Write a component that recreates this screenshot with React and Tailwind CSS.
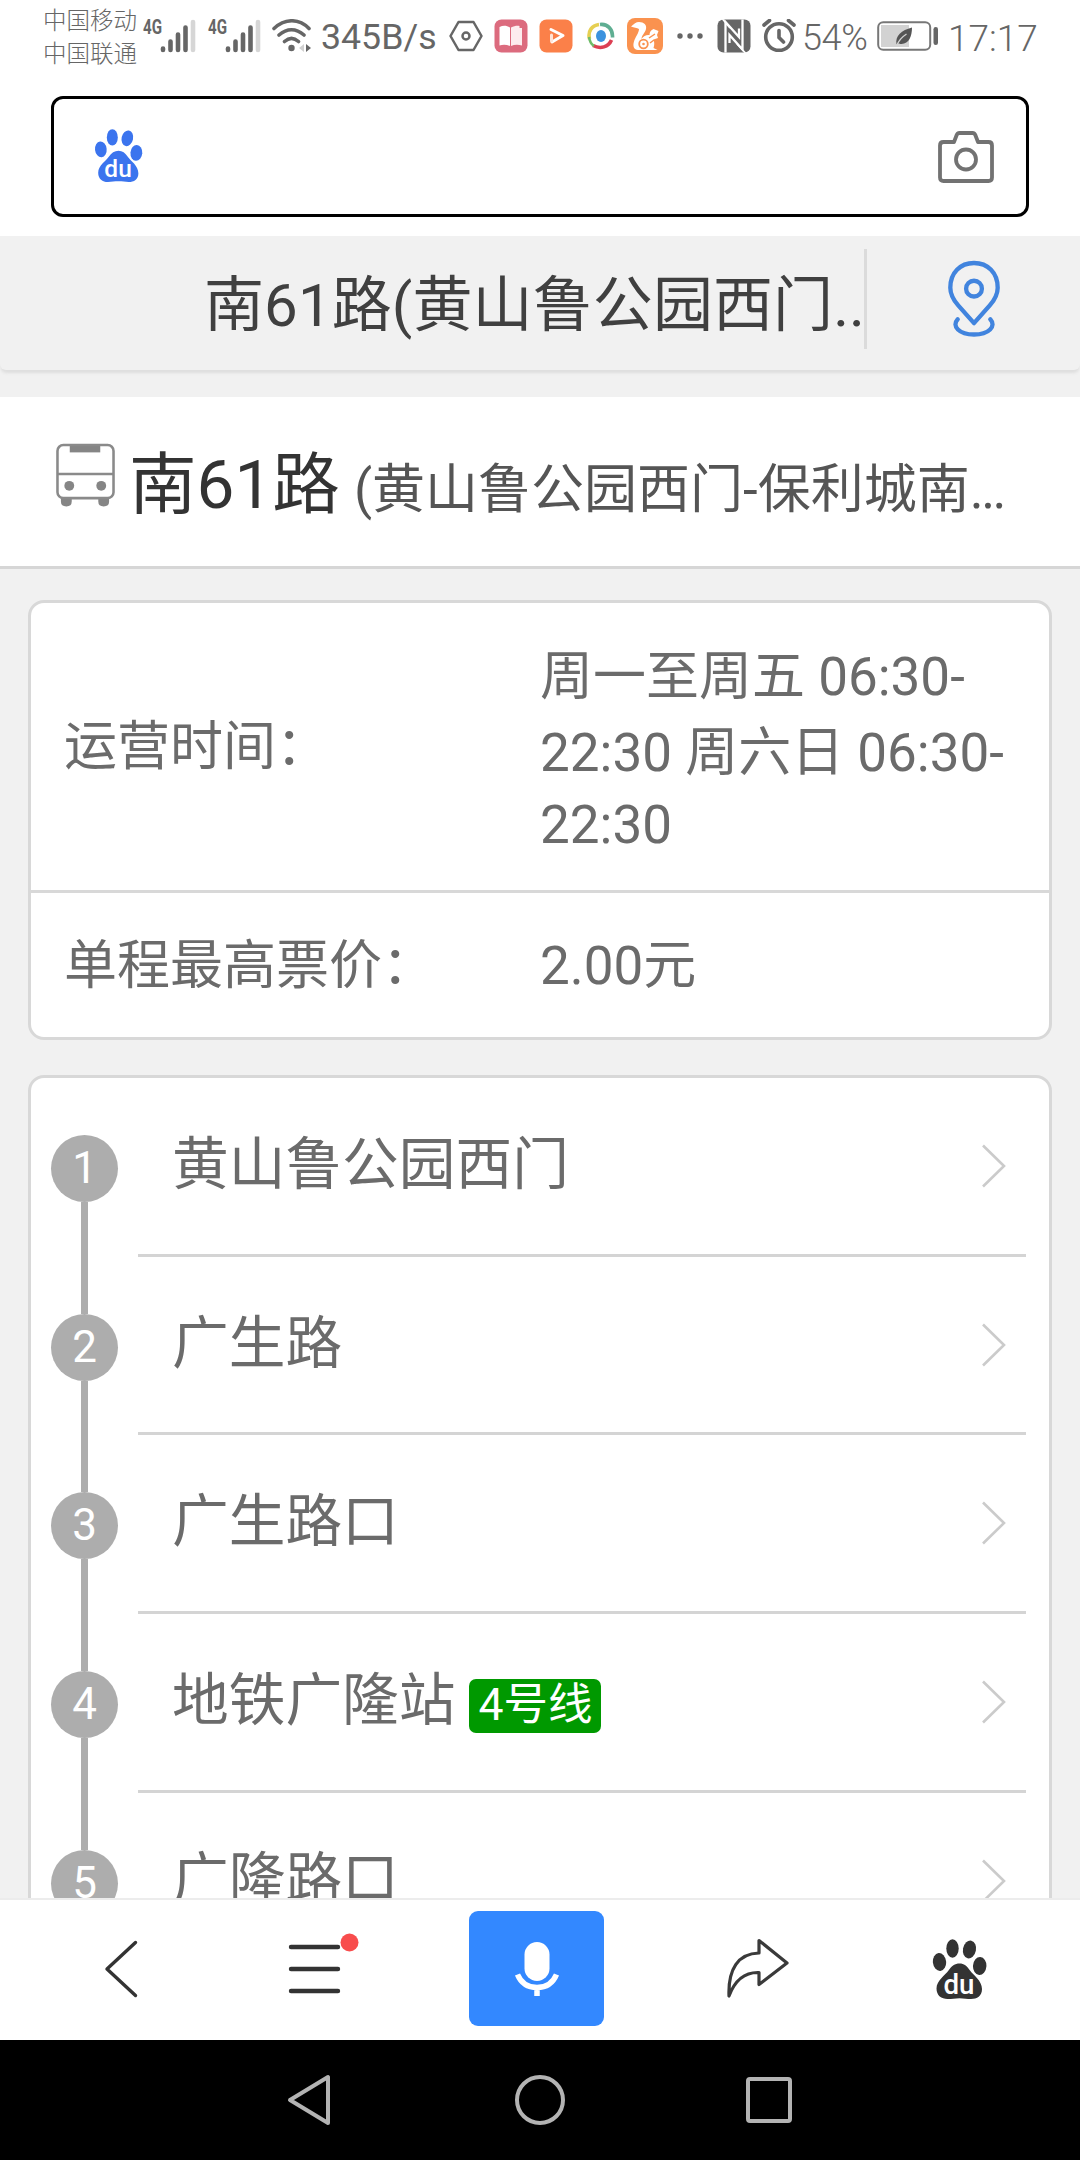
import React from 'react';

const stations = [
    { id: 1, name: '黄山鲁公园西门' },
    { id: 2, name: '广生路' },
    { id: 3, name: '广生路口' },
    { id: 4, name: '地铁广隆站', line: '4号线' },
    { id: 5, name: '广隆路口' },
];

function Paw({ className }) {
    return (
        <svg className={className} viewBox="0 0 54 60" fill="currentColor">
            <ellipse cx="7" cy="23" rx="6.6" ry="9" transform="rotate(-6 7 23)" />
            <ellipse cx="20" cy="9.5" rx="6.2" ry="9.3" />
            <ellipse cx="37" cy="10.5" rx="6.5" ry="9" transform="rotate(12 37 10.5)" />
            <ellipse cx="47.2" cy="27" rx="6.7" ry="9" transform="rotate(4 47.2 27)" />
            <path d="M27 24.5c4.5 0 7.500 2.500 10.500 7s12 10 12 18.500c0 7-5 10-11 10-4 0-7-.8-11.500-.8s-7.500.8-12 .8c-6 0-11-3.500-11-10.500 0-8 9-13.500 12-18s6.500-7 11-7z" />
            <text x="26.500" y="54.500" textAnchor="middle" fill="white" fontSize="28" fontWeight="500" textLength="31" lengthAdjust="spacingAndGlyphs" fontFamily="Roboto, sans-serif">du</text>
        </svg>
    );
}

function Signal({ className }) {
    return (
        <div className={className}>
            <svg className="w-[54px] h-[38px] overflow-visible" viewBox="0 0 54 38">
                <text x="0" y="16.500" fontSize="20" fontWeight="700" fill="#666" textLength="19" lengthAdjust="spacingAndGlyphs" fontFamily="Roboto, sans-serif">4G</text>
                <g strokeWidth="4.600" strokeLinecap="round" stroke="#666">
                    <path d="M20 31.500v1.500M27.500 24.500v8.500M35 17.500v15.500M42.500 10.500v22.500" />
                    <path d="M50 5v28" stroke="#d6d6d6" />
                </g>
            </svg>
        </div>
    );
}

function StatusBar() {
    return (
        <div className="h-[72px] shrink-0 flex items-center text-[#666] whitespace-nowrap">
            <div className="ml-[43px] w-[100px] text-[23.500px] leading-[33px] font-light pt-[4px]">
                <p>中国移动</p>
                <p>中国联通</p>
            </div>
            <Signal className="w-[65px]" />
            <Signal className="w-[64px]" />

            {/* WIFI */}
            <svg className="w-[40px] h-[34px] mr-[9px]" viewBox="0 0 40 34" fill="none" stroke="#666" strokeWidth="3.600" strokeLinecap="round">
                <path d="M2 9.500C13-.8 27-.8 37 9.500M7 16c8-7 17-7 25 0M12.500 22.500c4.500-4 9.500-4 14 0" />
                <circle cx="19.500" cy="29" r="3.200" fill="#666" stroke="none" />
                <path d="M32 25v8l-5-4z" fill="#d0d0d0" stroke="none" />
                <path d="M34 25v8l5-4z" fill="#666" stroke="none" />
            </svg>
            <span className="w-[128px] pt-[4px] text-[35.700px] leading-none">345B/s</span>

            {/* APP NOTIFICATIONS */}
            <svg className="w-[34px] h-[32px]" viewBox="0 0 34 32" fill="none" stroke="#666" strokeWidth="2.500" strokeLinejoin="round">
                <path d="M9.500 2h15L32.500 16l-8 14h-15L1.500 16z" />
                <circle cx="17" cy="16" r="3.500" />
            </svg>
            <svg className="w-[34px] h-[34px] ml-[11px]" viewBox="0 0 34 34">
                <rect x="0.500" y="0.500" width="33" height="33" rx="7" fill="#dc6b7e" />
                <path d="M5.500 8c4-2 7-1.500 10.500.5v18.500c-3.500-1.500-7-1.800-10.500-.5z" fill="white" />
                <path d="M17 8.500c3-1.500 6-2 8.500-1.500v2h2.500v17.500c-4-1-8-.8-11 .5z" fill="#fdecee" />
            </svg>
            <svg className="w-[34px] h-[34px] ml-[11px]" viewBox="0 0 34 34">
                <rect x="0.500" y="0.500" width="33" height="33" rx="7" fill="#fb8049" />
                <path d="M12 10.500l12 6-11 6.500" fill="none" stroke="white" strokeWidth="3" strokeLinecap="round" strokeLinejoin="round" />
                <path d="M12.500 16v6" stroke="#ffe3d6" strokeWidth="3" strokeLinecap="round" />
            </svg>
            <svg className="w-[28px] h-[28px] ml-[14px]" viewBox="0 0 28 28" fill="none" strokeWidth="3.600">
                <path d="M2.500 17C.5 9 5 3.500 12 2.500" stroke="#e6cf52" />
                <path d="M13 2.500c8-1 13 5.500 12.500 13" stroke="#5fae92" />
                <path d="M24.500 18c-3 7-11 9.500-18.500 5.500" stroke="#dc3f52" />
                <path d="M2 15c.5 4 2 7 5 9" stroke="#6ebc68" strokeWidth="2.500" />
                <ellipse cx="14" cy="14" rx="5" ry="6" fill="#3c92de" />
            </svg>
            <svg className="w-[36px] h-[36px] ml-[12px]" viewBox="0 0 36 36">
                <rect width="36" height="36" rx="8" fill="#fa924f" />
                <path d="M4 8.500C7 6 9 4 12 4c5 0 8 3 7 7-1 4-4.500 6.500-4.500 10 2-3 5-4.500 8-4 0-3 1.500-5 4-6l5 2-1.500 4 1 3-4.500 1.500c1 3 1 5.500 0 8.500l4 2H11C7 32 5.500 28 7 23.500 8 19.500 12 15 12 11 10 9.500 7 10 4 8.500z" fill="white" />
                <circle cx="16.500" cy="26" r="4.300" fill="none" stroke="#fa924f" strokeWidth="1.800" />
                <circle cx="16.500" cy="26" r="1.300" fill="#fa924f" />
                <path d="M22 20l6-4M23 25l4-3" stroke="#fa924f" strokeWidth="1.500" />
            </svg>
            <svg className="w-[27px] h-[8px] ml-[13px]" viewBox="0 0 27 8" fill="#666">
                <circle cx="4" cy="4" r="2.700" />
                <circle cx="14" cy="4" r="2.700" />
                <circle cx="24" cy="4" r="2.700" />
            </svg>

            {/* NFC / ALARM / BATTERY */}
            <svg className="w-[34px] h-[34px] ml-[14px]" viewBox="0 0 34 34">
                <rect x="0.500" y="0.500" width="33" height="33" rx="6" fill="#666" />
                <path d="M8.500 33.500V3L22 18V9.500M25.500 0.500V30.500L12.500 16v8" fill="none" stroke="white" strokeWidth="2.300" />
                <path d="M5.500 0l7.500 9M20 25l8.500 9" stroke="white" strokeWidth="1.600" />
            </svg>
            <svg className="w-[34px] h-[34px] ml-[11px]" viewBox="0 0 34 34" fill="none" stroke="#666" strokeLinecap="round">
                <circle cx="17" cy="18" r="13.300" strokeWidth="3.600" />
                <path d="M2 6l5.500-4.500M32 6l-5.500-4.500M17 11.500v7l4.500 4.500" strokeWidth="3.600" />
            </svg>
            <span className="ml-[6px] w-[75px] pt-[4px] text-[36px] leading-none font-light tracking-[-0.400px]">54%</span>
            <svg className="w-[62px] h-[30px]" viewBox="0 0 62 30">
                <rect x="1.200" y="1.200" width="52" height="27.500" rx="5" fill="none" stroke="#777" strokeWidth="2" />
                <rect x="4" y="4" width="28" height="22" fill="#d2d2d2" />
                <path d="M35 6.500c0 9-3 16-10.500 16.500-1.500 0-2.500-.2-3.500-.8l-1.500 1c-1.500-8 5-14 15.500-16.700z" fill="#555" />
                <path d="M20 24c2-5 5-8 9.500-11" stroke="#d2d2d2" strokeWidth="1.300" fill="none" />
                <rect x="56.500" y="6" width="4.500" height="18" rx="2.200" fill="#666" />
            </svg>
            <span className="ml-[9px] pt-[4px] text-[37px] leading-none font-light">17:17</span>
        </div>
    );
}

function SearchBox() {
    return (
        <div className="h-[164px] shrink-0 px-[51px] pt-[24px]">
            <div className="h-[121px] rounded-[12px] border-3 border-black flex items-center justify-between pl-[40px] pr-[32px]">
                <Paw className="w-[49px] h-[53px] -mt-[2px] text-[#3b74ee]" />
                <svg className="w-[56px] h-[52px]" viewBox="0 0 56 52" fill="none" stroke="#727272" strokeWidth="3.800" strokeLinejoin="round">
                    <path d="M5.500 11H16l2.500-6.500q.8-2.500 3-2.500h13q2.200 0 3 2.500L40 11h10.500q3.500 0 3.500 3.500v32q0 3.500-3.500 3.500h-45Q2 50 2 46.500v-32Q2 11 5.500 11z" />
                    <circle cx="28" cy="28.500" r="10" />
                </svg>
            </div>
        </div>
    );
}

function PageTitle() {
    return (
        <div className="h-[161px] shrink-0 bg-[#f1f1f1]">
            <div className="h-[134px] rounded-[6px] flex items-start shadow-[0_4px_3px_-1px_#dedede]">
                <h1 className="ml-[204px] w-[660px] h-[134px] leading-[139px] text-[60px] tracking-[0.100px] text-[#404040] whitespace-nowrap overflow-hidden">南61路(黄山鲁公园西门..</h1>
                <div className="w-[3px] h-[100px] mt-[13px] bg-[#dbdbdb]" />
                <svg className="w-[54px] h-[77px] ml-[80px] mt-[24px]" viewBox="0 0 54 78" fill="none" stroke="#4184de" strokeWidth="4.400" strokeLinecap="round">
                    <path d="M27 64L11 46C5 39 3 34 3 28 3 13 13 3 27 3s24 10 24 25c0 6-2 11-8 18z" strokeLinejoin="round" />
                    <circle cx="27" cy="29" r="8" />
                    <path d="M10.500 60C4 67 12 75.500 27 75.500s23-8.500 16.500-15.500" />
                </svg>
            </div>
        </div>
    );
}

function RouteHeader() {
    return (
        <div className="h-[172px] shrink-0 bg-white border-b-3 border-[#d6d6d6] flex whitespace-nowrap">
            <svg className="w-[59px] h-[64px] ml-[56px] mt-[46px]" viewBox="0 0 60 64">
                <g fill="#858585">
                    <path d="M5 55h11v4q0 5-5.500 5T5 59zM43 55h11v4q0 5-5.500 5T43 59z" />
                    <rect x="14" y="1" width="31" height="8" />
                    <circle cx="13.500" cy="43" r="5" />
                    <circle cx="46" cy="43" r="5" />
                </g>
                <rect x="1.500" y="1.500" width="57" height="54" rx="6" fill="none" stroke="#8a8a8a" strokeWidth="2.600" />
                <path d="M1.500 31h57" stroke="#8a8a8a" strokeWidth="2.500" />
            </svg>
            <div className="flex items-baseline ml-[14px] h-[169px]">
                <span className="text-[67.500px] leading-[175px] text-[#333]">南61路</span>
                <span className="ml-[14px] text-[53px] text-[#555]">(黄山鲁公园西门-保利城南<span className="tracking-[-2.500px]">...</span></span>
            </div>
        </div>
    );
}

function InfoCard() {
    return (
        <div className="mx-[28px] mt-[31px] h-[440px] shrink-0 bg-white border-3 border-[#d8d8d8] rounded-[16px] text-[53px] text-[#6b6b6b] whitespace-nowrap">
            <div className="h-[290px] flex border-b-3 border-[#d8d8d8]">
                <p className="w-[509px] pl-[33px] leading-[289px]">运营时间：</p>
                <div className="pt-[38px]">
                    <p className="h-[76px] leading-[72px]">周一至周五 06:30-</p>
                    <p className="h-[72px] leading-[72px]">22:30 周六日 06:30-</p>
                    <p className="h-[72px] leading-[72px]">22:30</p>
                </div>
            </div>
            <div className="h-[144px] flex">
                <p className="w-[509px] pl-[33px] leading-[146px]">单程最高票价：</p>
                <p className="leading-[146px]">2.00元</p>
            </div>
        </div>
    );
}

function StationRow({ station, first }) {
    return (
        <div className="h-[178.700px] shrink-0 flex">
            <div className="w-[107px] flex flex-col items-center pb-[2px] -mb-[2px]">
                <div className={first ? 'flex-1' : 'flex-1 w-[7px] bg-[#adadad]'} />
                <div className="size-[67px] rounded-full bg-[#adadad] text-white text-[44px] leading-[66px] text-center">{station.id}</div>
                <div className="flex-1 w-[7px] -mb-[2px] bg-[#adadad]" />
            </div>
            <div className="flex-1 mr-[23px] pl-[34px] pr-[20px] flex items-center border-b-3 border-[#d4d4d4]">
                <span className="text-[56.700px] leading-[80px] -mt-[2px] text-[#6b6b6b]">{station.name}</span>
                {station.line && (
                    <span className="ml-[14px] mt-[8px] w-[132px] h-[54px] rounded-[7px] bg-[#009900] text-white text-[44.500px] leading-[52px] text-center">{station.line}</span>
                )}
                <svg className="w-[25px] h-[44px] ml-auto" viewBox="0 0 25 44" fill="none" stroke="#cbcbcb" strokeWidth="2.600">
                    <path d="M2 1.500L23 22 2 42.500" />
                </svg>
            </div>
        </div>
    );
}

function Toolbar() {
    return (
        <div className="h-[142px] shrink-0 bg-white border-t-2 border-[#ececec] flex items-center pb-[3px]">
            <svg className="w-[34px] h-[58px] ml-[104px]" viewBox="0 0 34 58" fill="none" stroke="#333" strokeWidth="3.400" strokeLinecap="round" strokeLinejoin="round">
                <path d="M31.500 2.500L3 29l28.500 26.500" />
            </svg>
            <svg className="w-[74px] h-[60px] ml-[150px] overflow-visible" viewBox="0 0 74 60">
                <path d="M3 8h47M3 30h47M3 52h47" stroke="#333" strokeWidth="4.400" strokeLinecap="round" />
                <circle cx="61.500" cy="3.500" r="9" fill="#f84d4d" />
            </svg>
            <div className="w-[135px] h-[115px] ml-[107px] rounded-[9px] bg-[#3388ff] flex items-center justify-center">
                <svg className="w-[46px] h-[56px]" viewBox="0 0 46 56">
                    <rect x="10.500" y="1" width="25" height="39" rx="12.500" fill="white" />
                    <path d="M3.500 33.500C7 42 14 46.500 23 46.500S39 42 42.500 33.500M23 46v9" fill="none" stroke="white" strokeWidth="5.500" />
                </svg>
            </div>
            <svg className="w-[66px] h-[64px] ml-[121px]" viewBox="0 0 66 64" fill="none" stroke="#3a3a3a" strokeWidth="3.200" strokeLinejoin="round">
                <path d="M34 3.500L62 26 34 47.500V35.500C20 35 10 43 4 59 3 32 13 16.500 34 16z" />
            </svg>
            <Paw className="w-[55px] h-[60px] ml-[141px] text-[#333]" />
        </div>
    );
}

function NavBar() {
    return (
        <div className="h-[120px] shrink-0 bg-black flex items-center">
            <svg className="w-[46px] h-[54px] ml-[286px]" viewBox="0 0 46 54" fill="none" stroke="#b3b3b3" strokeWidth="4" strokeLinejoin="round">
                <path d="M42 4v46L4 27z" />
            </svg>
            <div className="size-[50px] ml-[183px] rounded-full border-4 border-[#b3b3b3]" />
            <div className="size-[46px] ml-[181px] rounded-[4px] border-4 border-[#b3b3b3]" />
        </div>
    );
}

export default function App() {
    return (
        <div className="w-[1080px] h-[2160px] flex flex-col overflow-hidden bg-white font-[Roboto,'Noto_Sans_CJK_SC',sans-serif]">
            <StatusBar />
            <SearchBox />
            <PageTitle />
            <div className="flex-1 min-h-0 overflow-hidden flex flex-col bg-[#f1f1f1]">
                <RouteHeader />
                <InfoCard />
                <div className="mx-[28px] mt-[35px] shrink-0 bg-white border-3 border-[#d8d8d8] rounded-[16px]">
                    {stations.map((station, index) => (
                        <StationRow key={station.id} station={station} first={index === 0} />
                    ))}
                </div>
            </div>
            <Toolbar />
            <NavBar />
        </div>
    );
}
